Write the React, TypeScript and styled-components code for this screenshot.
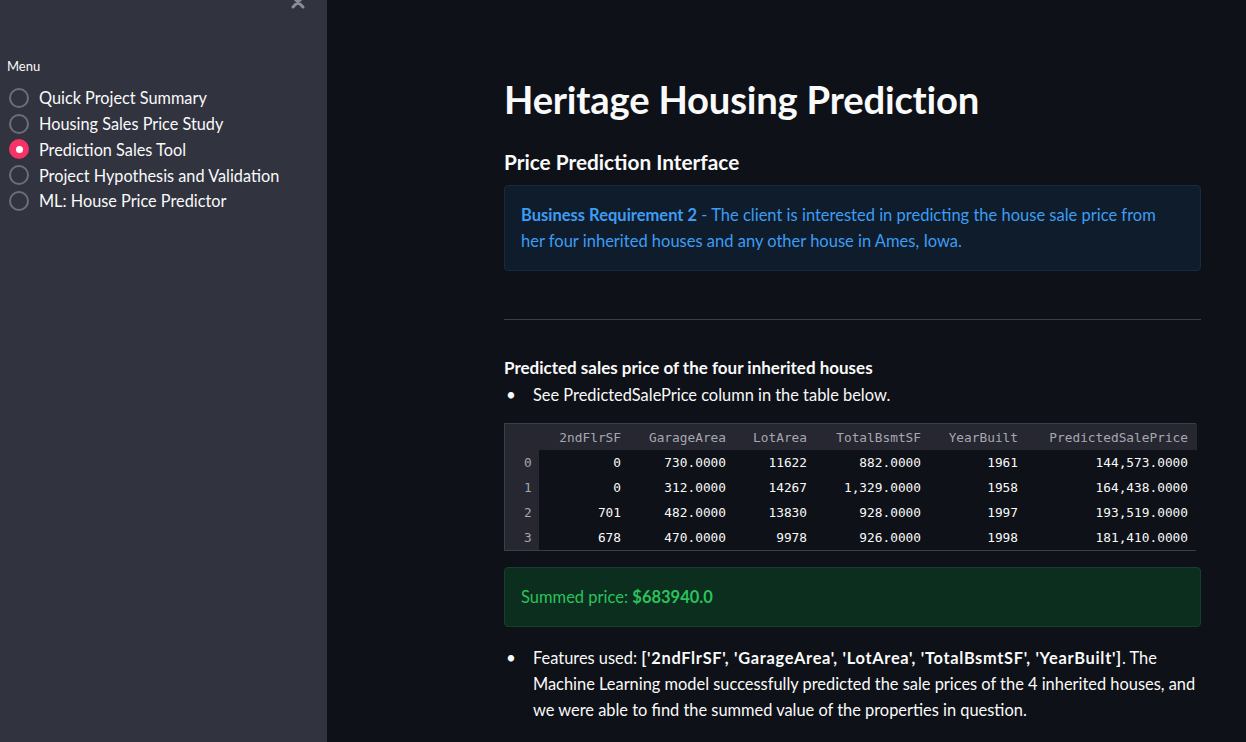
import React from "react";
import styled, { createGlobalStyle } from "styled-components";

const Global = createGlobalStyle`
  html, body { margin: 0; padding: 0; background: #0e1117; }
  body { font-family: Lato, "Open Sans", sans-serif; color: #fafafa; }
  * { box-sizing: border-box; }
`;

const Page = styled.div`
  display: flex;
  width: 1246px;
  height: 742px;
  overflow: hidden;
  background: #0e1117;
`;

const Sidebar = styled.aside`
  position: relative;
  flex: 0 0 327px;
  background: #31333f;
  padding: 58px 0 0 7px;
`;

const CloseBtn = styled.div`
  position: absolute;
  top: -6px;
  left: 290px;
  color: #8a8c95;
`;

const MenuLabel = styled.div`
  font-size: 13px;
  color: #fafafa;
  margin-bottom: 11px;
`;

const RadioList = styled.div`
  display: flex;
  flex-direction: column;
  padding-left: 2px;
`;

const RadioRow = styled.div`
  display: flex;
  align-items: center;
  height: 25.75px;
  gap: 10px;
  font-size: 16.3px;
  color: #fafafa;
`;

const Circle = styled.span<{ $on?: boolean }>`
  flex: 0 0 20px;
  width: 20px;
  height: 20px;
  border-radius: 50%;
  border: ${(p) => (p.$on ? "none" : "2px solid #6c6e78")};
  background: ${(p) => (p.$on ? "#f63366" : "transparent")};
  display: flex;
  align-items: center;
  justify-content: center;
  &::after {
    content: "";
    display: ${(p) => (p.$on ? "block" : "none")};
    width: 7px;
    height: 7px;
    border-radius: 50%;
    background: #fff;
  }
`;

const Main = styled.main`
  flex: 1;
  padding: 77px 0 0 177px;
`;

const Column = styled.div`
  width: 697px;
  display: flex;
  flex-direction: column;
`;

const Title = styled.h1`
  margin: 0;
  font-size: 38.2px;
  font-weight: 700;
  line-height: 44px;
  letter-spacing: -0.2px;
`;

const Subtitle = styled.h3`
  margin: 27px 0 0;
  font-size: 20.8px;
  font-weight: 700;
  line-height: 28px;
`;

const InfoBox = styled.div`
  margin-top: 9px;
  padding: 16px 24px 16px 16px;
  background: #0f1c2c;
  border: 1px solid #172b40;
  border-radius: 4px;
  color: #3d9df3;
  font-size: 16.5px;
  line-height: 26px;
`;

const Divider = styled.hr`
  margin: 48px 0 0;
  border: none;
  border-top: 1px solid #3b3d48;
  height: 0;
`;

const Strong = styled.div`
  margin-top: 38px;
  font-size: 17px;
  font-weight: 700;
  line-height: 20px;
`;

const List = styled.ul<{ $mt?: number }>`
  margin: ${(p) => p.$mt ?? 0}px 0 0;
  padding: 0;
  list-style: none;
  font-size: 16.4px;
  line-height: 26px;
`;

const Item = styled.li`
  display: grid;
  grid-template-columns: 29px 1fr;
  &::before {
    content: "•";
    padding-left: 2px;
    font-size: 17px;
  }
`;

const Bold = styled.b`
  letter-spacing: 0.7px;
`;

const Table = styled.div`
  margin-top: 15px;
  width: 692px;
  display: grid;
  grid-template-columns: 34px 91px 105px 81px 114px 97px 170px;
  grid-template-rows: 26px repeat(4, 25px);
  border: 1px solid #3b3d48;
  font-family: "DejaVu Sans Mono", "Liberation Mono", monospace;
  font-size: 12.8px;
`;

const Cell = styled.div<{ $kind: "head" | "index" | "data" }>`
  display: flex;
  align-items: center;
  justify-content: ${(p) => (p.$kind === "index" ? "flex-start" : "flex-end")};
  padding: ${(p) => (p.$kind === "index" ? "0 0 0 19px" : "0 9px 0 0")};
  background: ${(p) => (p.$kind === "data" ? "#0e1117" : "#262730")};
  color: ${(p) => (p.$kind === "data" ? "#fafafa" : "#a5a7b1")};
`;

const SuccessBox = styled.div`
  margin-top: 16px;
  height: 60px;
  display: flex;
  align-items: center;
  padding: 0 16px;
  background: #0c2e1f;
  border: 1px solid #15402a;
  border-radius: 4px;
  color: #2bc25b;
  font-size: 16.5px;
`;

const headers = ["2ndFlrSF", "GarageArea", "LotArea", "TotalBsmtSF", "YearBuilt", "PredictedSalePrice"];
const rows = [
  ["0", "730.0000", "11622", "882.0000", "1961", "144,573.0000"],
  ["0", "312.0000", "14267", "1,329.0000", "1958", "164,438.0000"],
  ["701", "482.0000", "13830", "928.0000", "1997", "193,519.0000"],
  ["678", "470.0000", "9978", "926.0000", "1998", "181,410.0000"],
];

const menu = [
  "Quick Project Summary",
  "Housing Sales Price Study",
  "Prediction Sales Tool",
  "Project Hypothesis and Validation",
  "ML: House Price Predictor",
];

export default function App() {
  return (
    <>
      <Global />
      <Page>
        <Sidebar>
          <CloseBtn>
            <svg width="16" height="16" viewBox="0 0 16 16">
              <path d="M3 3 L13 13 M13 3 L3 13" stroke="currentColor" strokeWidth="3" strokeLinecap="round" />
            </svg>
          </CloseBtn>
          <MenuLabel>Menu</MenuLabel>
          <RadioList>
            {menu.map((m, i) => (
              <RadioRow key={m}>
                <Circle $on={i === 2} />
                {m}
              </RadioRow>
            ))}
          </RadioList>
        </Sidebar>
        <Main>
          <Column>
            <Title>Heritage Housing Prediction</Title>
            <Subtitle>Price Prediction Interface</Subtitle>
            <InfoBox>
              <b>Business Requirement 2</b> - The client is interested in predicting the house sale price from her
              four inherited houses and any other house in Ames, Iowa.
            </InfoBox>
            <Divider />
            <Strong>Predicted sales price of the four inherited houses</Strong>
            <List $mt={4}>
              <Item>
                <span>See PredictedSalePrice column in the table below.</span>
              </Item>
            </List>
            <Table>
              <Cell $kind="head" />
              {headers.map((h) => (
                <Cell key={h} $kind="head">
                  {h}
                </Cell>
              ))}
              {rows.map((r, i) => (
                <React.Fragment key={i}>
                  <Cell $kind="index">{i}</Cell>
                  {r.map((v, j) => (
                    <Cell key={j} $kind="data">
                      {v}
                    </Cell>
                  ))}
                </React.Fragment>
              ))}
            </Table>
            <SuccessBox>
              Summed price:&nbsp;<b>$683940.0</b>
            </SuccessBox>
            <List $mt={18}>
              <Item>
                <span>
                  Features used: <Bold>['2ndFlrSF', 'GarageArea', 'LotArea', 'TotalBsmtSF', 'YearBuilt']</Bold>. The
                  Machine Learning model successfully predicted the sale prices of the 4 inherited houses, and we were
                  able to find the summed value of the properties in question.
                </span>
              </Item>
            </List>
          </Column>
        </Main>
      </Page>
    </>
  );
}
